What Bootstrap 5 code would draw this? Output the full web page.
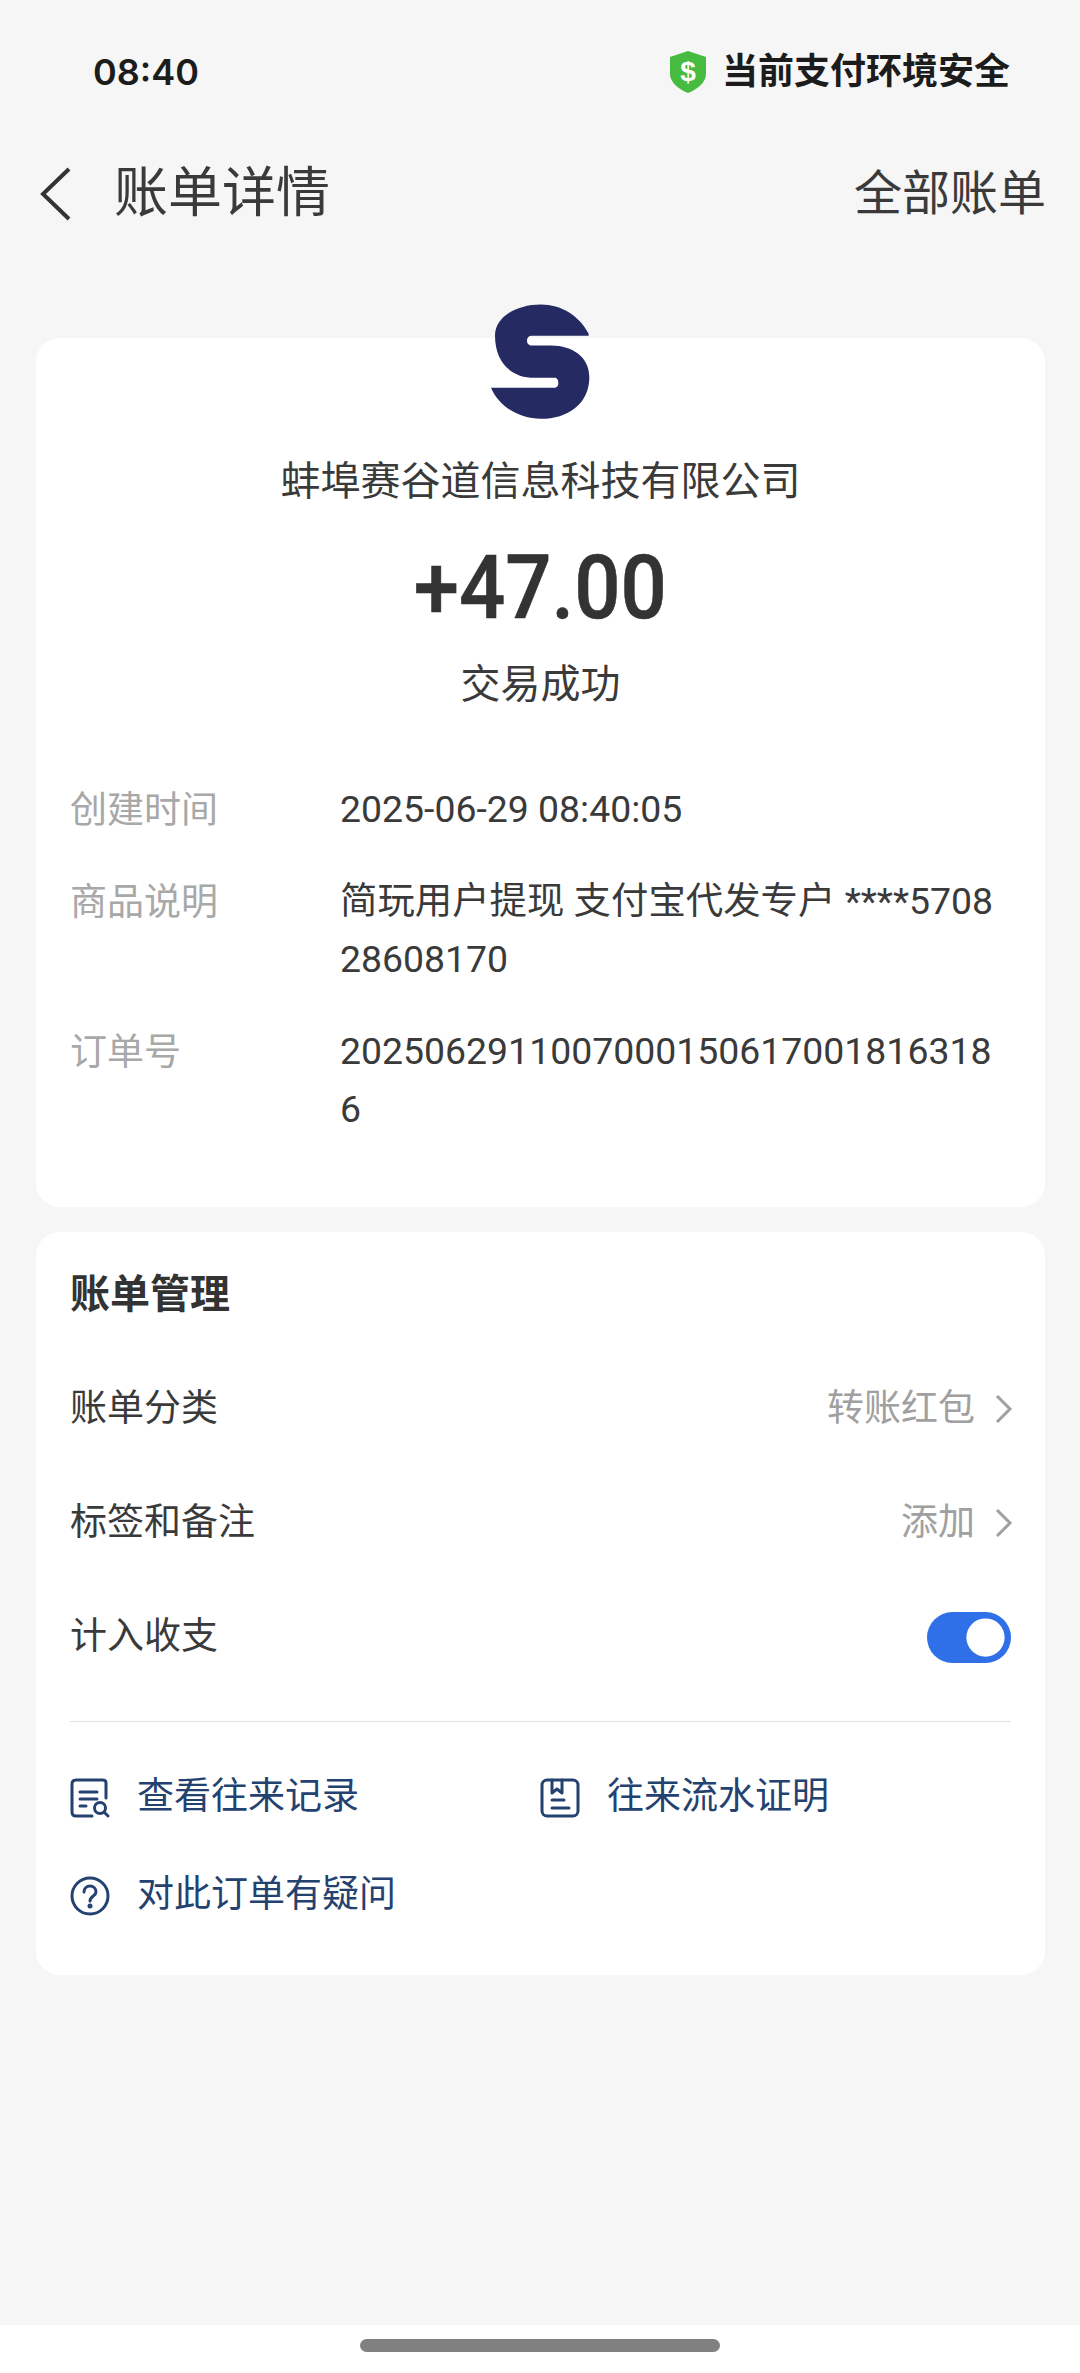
<!DOCTYPE html>
<html lang="zh-CN">
<head>
<meta charset="utf-8">
<title>账单详情</title>
<link href="https://cdn.jsdelivr.net/npm/bootstrap@5.3.0/dist/css/bootstrap.min.css" rel="stylesheet">
<style>
html,body{margin:0;background:#f6f6f6}
body{font-family:Roboto,"Noto Sans CJK SC",sans-serif;color:#333;width:1080px;height:2373px;overflow:hidden}
.shell{height:2373px}
.statusline{height:143px;padding:0 70px 0 93px;color:#1c1c1c;font-weight:700;font-size:36px;line-height:1}
.statusline .clock{font-family:Inter,sans-serif;font-weight:600}
.statusline .secure{font-size:36px}
.shield{margin-right:15px}
.topnav{height:100px;padding:2px 34px 0 40px;margin-bottom:95px;color:#333}
.topnav h1{font-size:54px;font-weight:400;margin:0 0 0 38px;line-height:1;color:#3a3a3a}
.topnav .allbills{font-size:48px;line-height:1;color:#3a3a3a}
.sheet{margin:0 35px 0 36px;border:0;border-radius:24px;background:#fff;color:#333}
.sheet-a{height:869px;padding:0 34px}
.sheet-b{height:743px;margin-top:25px;padding:0 34px}
.logo-s{display:block;width:100px;height:116px;margin:-34px auto 0}
.payee{font-size:40px;line-height:50px;margin-top:37px;text-align:center;color:#3a3a3a}
.amount{font-size:89px;font-weight:500;line-height:100px;height:100px;margin-top:31px;text-align:center;color:#333}
.amount span{display:inline-block;transform:scaleX(.915);-webkit-text-stroke:.6px #333}
.state{font-size:40px;line-height:50px;margin-top:22px;text-align:center;color:#3a3a3a}
.facts{margin-top:72px;font-size:37.4px;line-height:58px}
.fact{margin-bottom:34px}
.fact-k{width:270px;flex:none;color:#a8a8a8;font-size:37px}
.fact-v{color:#3a3a3a;white-space:nowrap;margin-top:-2px;margin-bottom:2px}
.sheet-title{font-size:40px;font-weight:700;line-height:50px;padding-top:38px;margin:0;color:#333}
.mgmt{font-size:37px;line-height:50px;padding-top:32px}
.mgmt-row{height:114px;color:#3a3a3a}
.mgmt-row .val{color:#a0a0a0;margin-right:-2px}
.chev{width:18px;height:30px;margin-left:20px}
.form-switch.tog{padding:0;margin:0;min-height:0;line-height:0}
.form-switch.tog .form-check-input{width:84px;height:51px;margin:0;border:0;float:none;background-color:#2f6fe8;border-radius:26px;background-size:contain}
.rule{margin:27px 0 0;border-top:1px solid #e2e2e2;opacity:1}
.links{color:#24426f;font-size:37px;line-height:50px;padding-top:50px}
.link-item{width:470px;height:98px;align-items:flex-start}
.link-item svg{width:40px;height:40px;flex:none;margin-top:6px;margin-right:27px}
.gesture{height:48px;background:#fff;margin-top:auto;padding-top:14px}
.gesture span{display:block;width:360px;height:13px;background:#808080;border-radius:7px;margin:0 auto}
</style>
</head>
<body>
<div class="shell d-flex flex-column">
  <div class="statusline d-flex justify-content-between align-items-center">
    <span class="clock">08:40</span>
    <span class="secure d-flex align-items-center">
      <svg class="shield" width="38" height="44" viewBox="1 0 38 44"><path d="M20 1 L38 7 V24 C38 33 28 40 20 43 C12 40 2 33 2 24 V7 Z" fill="#47bb3f"/><text x="20" y="31" text-anchor="middle" font-family="Liberation Sans" font-size="28" font-weight="700" fill="#fff">$</text></svg>
      当前支付环境安全
    </span>
  </div>
  <div class="topnav d-flex align-items-center justify-content-between">
    <div class="d-flex align-items-center">
      <svg width="36" height="54" viewBox="0 0 36 54"><path d="M31 2 L5 27 L31 52" transform="translate(-2 0)" fill="none" stroke="#333" stroke-width="4"/></svg>
      <h1>账单详情</h1>
    </div>
    <span class="allbills">全部账单</span>
  </div>

  <div class="card sheet sheet-a">
    <svg class="logo-s" viewBox="150 72 300 345"><path fill="#252a63" d="M443 160 C415 105 360 72 300 72 C225 72 162 110 162 165 C162 250 215 292 280 292 L340 292 C350 292 352 300 352 308 C352 318 345 322 338 322 L150 322 C175 380 235 415 300 415 C380 415 445 370 445 290 C445 230 395 195 330 195 L272 195 C262 195 258 188 258 180 C258 172 264 166 272 166 L443 166 Z"/></svg>
    <div class="payee">蚌埠赛谷道信息科技有限公司</div>
    <div class="amount"><span>+47.00</span></div>
    <div class="state">交易成功</div>
    <div class="facts">
      <div class="d-flex fact"><div class="fact-k">创建时间</div><div class="fact-v">2025-06-29 08:40:05</div></div>
      <div class="d-flex fact"><div class="fact-k">商品说明</div><div class="fact-v">简玩用户提现 支付宝代发专户 ****5708<br>28608170</div></div>
      <div class="d-flex fact"><div class="fact-k">订单号</div><div class="fact-v">2025062911007000150617001816318<br>6</div></div>
    </div>
  </div>

  <div class="card sheet sheet-b">
    <h2 class="sheet-title">账单管理</h2>
    <div class="mgmt">
      <div class="mgmt-row d-flex justify-content-between align-items-center">
        <span>账单分类</span>
        <span class="val d-flex align-items-center">转账红包<svg class="chev" viewBox="0 0 18 30"><path d="M2 2 L15 15 L2 28" fill="none" stroke="#a0a0a0" stroke-width="3"/></svg></span>
      </div>
      <div class="mgmt-row d-flex justify-content-between align-items-center">
        <span>标签和备注</span>
        <span class="val d-flex align-items-center">添加<svg class="chev" viewBox="0 0 18 30"><path d="M2 2 L15 15 L2 28" fill="none" stroke="#a0a0a0" stroke-width="3"/></svg></span>
      </div>
      <div class="mgmt-row d-flex justify-content-between align-items-center">
        <span>计入收支</span>
        <div class="form-check form-switch tog"><input class="form-check-input" type="checkbox" role="switch" checked aria-label="计入收支"></div>
      </div>
    </div>
    <hr class="rule">
    <div class="links d-flex flex-wrap">
      <div class="link-item d-flex">
        <svg viewBox="0 0 40 40" fill="none" stroke="#24426f" stroke-width="3" stroke-linecap="round" stroke-linejoin="round"><path d="M36 20 V5 Q36 2 33 2 H6 Q2 2 2 6 V34 Q2 38 6 38 H22"/><path d="M10 14 H27 M10 21 H27 M10 28 H16"/><circle cx="30" cy="30" r="5.5"/><path d="M34 34 L38 38"/></svg>
        <span>查看往来记录</span>
      </div>
      <div class="link-item d-flex">
        <svg viewBox="0 0 40 40" fill="none" stroke="#24426f" stroke-width="3" stroke-linecap="round" stroke-linejoin="round"><rect x="2" y="2" width="36" height="36" rx="5"/><path d="M12 2 V15 L17 11 L22 15 V2 M12 22 H24 M12 30 H29"/></svg>
        <span>往来流水证明</span>
      </div>
      <div class="link-item d-flex">
        <svg viewBox="0 0 40 40" fill="none" stroke="#24426f" stroke-width="3" stroke-linecap="round"><circle cx="20" cy="20" r="18"/><path d="M14 16 C14 8 26 8 26 16 C26 20 20 20 20 25"/><circle cx="20" cy="30" r="1" fill="#24426f"/></svg>
        <span>对此订单有疑问</span>
      </div>
    </div>
  </div>

  <div class="gesture"><span></span></div>
</div>
<script src="https://cdn.jsdelivr.net/npm/bootstrap@5.3.0/dist/js/bootstrap.bundle.min.js"></script>
</body>
</html>
